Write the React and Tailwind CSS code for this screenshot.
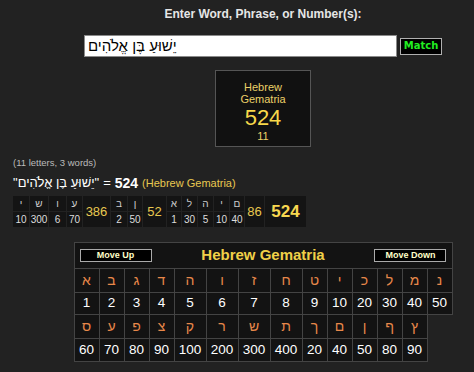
const chartTop = [
  ['א', 1], ['ב', 2], ['ג', 3], ['ד', 4], ['ה', 5], ['ו', 6], ['ז', 7],
  ['ח', 8], ['ט', 9], ['י', 10], ['כ', 20], ['ל', 30], ['מ', 40], ['נ', 50],
]
const chartBottom = [
  ['ס', 60], ['ע', 70], ['פ', 80], ['צ', 90], ['ק', 100], ['ר', 200], ['ש', 300],
  ['ת', 400], ['ך', 20], ['ם', 40], ['ן', 50], ['ף', 80], ['ץ', 90],
]

// breakdown of the phrase: letter cells and word totals
const breakdown = [
  { l: 'י', v: 10, w: 'w-[16px]' },
  { l: 'ש', v: 300, w: 'w-[18px]' },
  { l: 'ו', v: 6, w: 'w-[17px]' },
  { l: 'ע', v: 70, w: 'w-[15px]' },
  { total: 386, w: 'w-[27px]' },
  { l: 'ב', v: 2, w: 'w-[16px]' },
  { l: 'ן', v: 50, w: 'w-[14px]' },
  { total: 52, w: 'w-[23px]' },
  { l: 'א', v: 1, w: 'w-[14px]' },
  { l: 'ל', v: 30, w: 'w-[15px]' },
  { l: 'ה', v: 5, w: 'w-[15px]' },
  { l: 'י', v: 10, w: 'w-[15px]' },
  { l: 'ם', v: 40, w: 'w-[14px]' },
  { total: 86, w: 'w-[19px]' },
]

const phrase = 'יֵשׁוּעַ בֶּן אֱלֹהִים'

const cell = 'bg-[#131313] border-r border-b border-[#444444] flex items-center justify-center'

export default function App() {
  return (
    <div className="min-h-screen w-full bg-[#222222] font-['Liberation_Sans','Noto_Sans',sans-serif] text-[#dddddd]">
      <div className="pl-[52px] flex flex-col items-center pt-[7px]">
        <div className="text-[12px] leading-[15px] font-bold text-[#e6e6e6]">
          Enter Word, Phrase, or Number(s):
        </div>

        <div className="mt-[13px] flex items-center gap-[3px]">
          <input
            readOnly
            value={phrase}
            className="w-[313px] h-[22px] bg-white border border-[#8a8a8a] px-[3px] text-[15px] text-black outline-none"
          />
          <button className="h-[17px] w-[42px] bg-black border border-[#b0b0b0] text-[10px] font-bold text-[#22ee22] font-['DejaVu_Sans',sans-serif] leading-none">
            Match
          </button>
        </div>

        <div className="mt-[13px] w-[96px] h-[77px] bg-[#111111] border border-[#555555] flex flex-col items-center pt-[10px] text-[#ecd068]">
          <div className="text-[11px] leading-[12px]">Hebrew</div>
          <div className="text-[11px] leading-[13px]">Gematria</div>
          <div className="text-[22px] leading-[24px] text-[#f8d84a]">524</div>
          <div className="text-[11px] leading-[12px]">11</div>
        </div>
      </div>

      <div className="pl-[13px]">
        <div className="mt-[10px] text-[9.5px] leading-[12px] text-[#bbbbbb]">(11 letters, 3 words)</div>
        <div className="mt-[5px] h-[18px] flex items-center text-[13px] text-white whitespace-nowrap">
          <span>"{phrase}"</span>
          <span className="ml-[4px]">=</span>
          <span className="ml-[4px] text-[14px] font-bold">524</span>
          <span className="ml-[4px] text-[11px] text-[#e8c850]">(Hebrew Gematria)</span>
        </div>

        <div className="mt-[4px] flex gap-px">
          {breakdown.map((c, i) =>
            c.total ? (
              <div key={i} className={`${c.w} h-[31px] bg-[#141414] flex items-center justify-center text-[13px] text-[#e8c850]`}>
                {c.total}
              </div>
            ) : (
              <div key={i} className={`${c.w} flex flex-col gap-px`}>
                <div className="h-[15px] bg-[#141414] flex items-center justify-center text-[10px] text-[#cccccc]">{c.l}</div>
                <div className="h-[15px] bg-[#141414] flex items-center justify-center text-[10px] text-[#dddddd]">{c.v}</div>
              </div>
            )
          )}
          <div className="w-[41px] h-[31px] bg-[#141414] flex items-center justify-center text-[17px] font-bold text-[#f8d850]">
            524
          </div>
        </div>
      </div>

      <div className="pl-[52px] flex justify-center">
        <div className="mt-[15px] grid grid-cols-[25px_25px_25px_25px_32px_32px_32px_32px_25px_25px_25px_25px_25px_25px] border-l border-t border-[#444444]">
          <div className="col-span-14 h-[26px] bg-[#131313] border-r border-b border-[#444444] flex items-center justify-between px-[5px]">
            <button className="w-[72px] h-[13px] bg-black border border-[#aaaaaa] text-[9px] font-bold leading-none text-[#ffffc8]">
              Move Up
            </button>
            <span className="text-[15px] font-bold text-[#f0d048]">Hebrew Gematria</span>
            <button className="w-[72px] h-[13px] bg-black border border-[#aaaaaa] text-[9px] font-bold leading-none text-[#ffffc8]">
              Move Down
            </button>
          </div>

          {chartTop.map(([l], i) => (
            <div key={'a' + i} className={`${cell} h-[24px] text-[14px] text-[#e8884a]`}>{l}</div>
          ))}
          {chartTop.map(([, v], i) => (
            <div key={'b' + i} className={`${cell} h-[22px] text-[13.5px] text-white`}>{v}</div>
          ))}
          {chartBottom.map(([l], i) => (
            <div key={'c' + i} className={`${cell} h-[24px] text-[14px] text-[#e8884a]`}>{l}</div>
          ))}
          <div />
          {chartBottom.map(([, v], i) => (
            <div key={'d' + i} className={`${cell} h-[23px] text-[13.5px] text-white`}>{v}</div>
          ))}
          <div />
        </div>
      </div>
    </div>
  )
}
